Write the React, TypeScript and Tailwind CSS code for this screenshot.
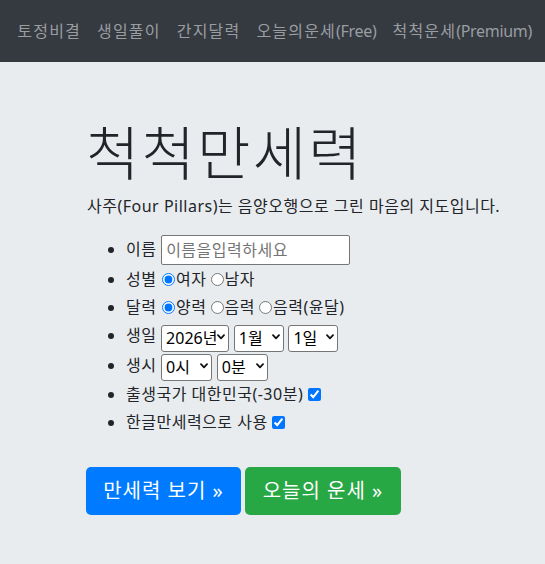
import React from "react";

const navLinks: [string, string][] = [
  ["신년운세", ""],
  ["토정비결", ""],
  ["생일풀이", ""],
  ["간지달력", ""],
  ["오늘의운세", "(Free)"],
  ["척척운세", "(Premium)"],
];

const font = { fontFamily: '"Noto Sans", "Noto Sans CJK KR", sans-serif' };

function Chevron() {
  return (
    <svg
      className="pointer-events-none absolute right-[4px] top-1/2 -translate-y-1/2"
      width="8"
      height="6"
      viewBox="0 0 8 6"
      fill="none"
    >
      <path d="M1 1.2 L4 4.3 L7 1.2" stroke="#111" strokeWidth="1.8" strokeLinecap="round" strokeLinejoin="round" />
    </svg>
  );
}

function Sel({ w, value, options }: { w: string; value: string; options: string[] }) {
  return (
    <span className={`relative inline-block ${w} h-[27px] align-middle`}>
      <select
        defaultValue={value}
        className="appearance-none w-full h-full border border-[#767676] rounded-[3px] bg-white text-[16px] text-black tracking-normal pl-[4px] pr-[12px] leading-[25px]"
      >
        {options.map((o) => (
          <option key={o}>{o}</option>
        ))}
      </select>
      <Chevron />
    </span>
  );
}

export default function App() {
  const years = Array.from({ length: 10 }, (_, i) => `${2026 - i}년`);
  const months = Array.from({ length: 12 }, (_, i) => `${i + 1}월`);
  const days = Array.from({ length: 31 }, (_, i) => `${i + 1}일`);
  const hours = Array.from({ length: 24 }, (_, i) => `${i}시`);
  const mins = Array.from({ length: 60 }, (_, i) => `${i}분`);

  return (
    <div className="min-h-[564px] bg-[#e9ecef] text-[#212529] text-[16px] tracking-[0.5px]" style={font}>
      <nav className="h-[62px] bg-[#343a40] overflow-hidden flex items-center justify-end pr-[5px]">
        <div className="flex whitespace-nowrap shrink-0">
          {navLinks.map(([ko, en]) => (
            <a key={ko} className="px-[8px] text-[#9a9da1] leading-[24px]">
              <span className="tracking-[1.2px]">{ko}</span>
              {en && <span className="tracking-[-0.3px]">{en}</span>}
            </a>
          ))}
        </div>
      </nav>

      <main className="pl-[87px] pt-[56px]">
        <h1 className="text-[58px] font-light leading-[1.2] tracking-[2.2px] mb-[6px] ml-[-1px]">척척만세력</h1>
        <p className="leading-[24px] mb-[16px]">
          사주(Four Pillars)는 음양오행으로 그린 마음의 지도입니다.
        </p>

        <ul className="list-disc pl-[39px] leading-[28px] mb-[31px]">
          <li className="leading-[31px]">
            이름{" "}
            <input
              placeholder="이름을입력하세요"
              className="w-[189px] h-[30px] border border-[#767676] rounded-[2px] bg-white px-[4px] text-[16px] placeholder:text-[#757575] align-middle"
            />
          </li>
          <li>
            성별 <input type="radio" name="g" defaultChecked className="align-[-1px] mx-[1px]" />여자
            <input type="radio" name="g" className="align-[-1px] ml-[4px] mr-[1px]" />남자
          </li>
          <li>
            달력 <input type="radio" name="c" defaultChecked className="align-[-1px] mx-[1px]" />양력
            <input type="radio" name="c" className="align-[-1px] ml-[4px] mr-[1px]" />음력
            <input type="radio" name="c" className="align-[-1px] ml-[4px] mr-[1px]" />음력(윤달)
          </li>
          <li>
            생일 <Sel w="w-[68px]" value="2026년" options={years} />{" "}
            <Sel w="w-[50px]" value="1월" options={months} />{" "}
            <Sel w="w-[50px]" value="1일" options={days} />
          </li>
          <li>
            생시 <Sel w="w-[51px]" value="0시" options={hours} />{" "}
            <Sel w="w-[51px]" value="0분" options={mins} />
          </li>
          <li>
            출생국가 대한민국(-30분) <input type="checkbox" defaultChecked className="align-[-1px]" />
          </li>
          <li>
            한글만세력으로 사용 <input type="checkbox" defaultChecked className="align-[-1px]" />
          </li>
        </ul>

        <div className="flex gap-[4px] ml-[-1px]">
          <button className="h-[48px] w-[155px] rounded-[5px] bg-[#007bff] text-white text-[20px] leading-[30px] tracking-[1px]">
            만세력 보기 »
          </button>
          <button className="h-[48px] w-[156px] rounded-[5px] bg-[#28a745] text-white text-[20px] leading-[30px] tracking-[1px]">
            오늘의 운세 »
          </button>
        </div>
      </main>
    </div>
  );
}
